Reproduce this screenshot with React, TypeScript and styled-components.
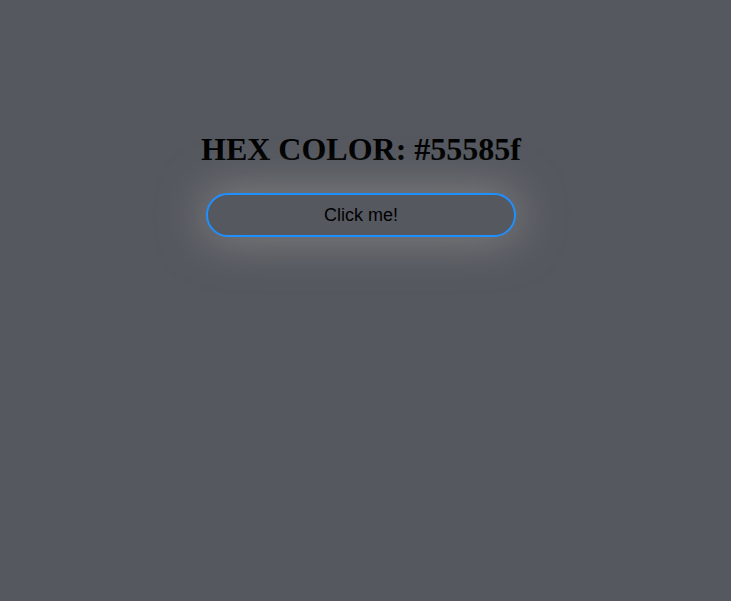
import React from "react";
import styled, { createGlobalStyle } from "styled-components";

const GlobalStyle = createGlobalStyle`
  html, body {
    margin: 0;
    padding: 0;
    background: #55585f;
  }
  body {
    min-height: 601px;
  }
`;

const Page = styled.div`
  display: flex;
  flex-direction: column;
  align-items: center;
  padding: 131px 0 0 0;
  margin-left: 7px;
  width: 708px;
`;

const Title = styled.h1`
  margin: 0;
  font-family: "Liberation Serif", "Times New Roman", serif;
  font-weight: bold;
  font-size: 32px;
  line-height: 37px;
  color: #000;
`;

const Button = styled.button`
  margin-top: 25px;
  width: 310px;
  height: 44px;
  border: 2px solid #1e90ff;
  border-radius: 22px;
  background: #55585f;
  color: #000;
  font-family: "Liberation Sans", Arial, sans-serif;
  font-size: 18px;
  box-shadow: 0 0 45px 4px rgba(140, 140, 140, 0.75);
  cursor: pointer;
`;

export default function App() {
  return (
    <>
      <GlobalStyle />
      <Page>
        <Title>HEX COLOR: #55585f</Title>
        <Button>Click me!</Button>
      </Page>
    </>
  );
}
